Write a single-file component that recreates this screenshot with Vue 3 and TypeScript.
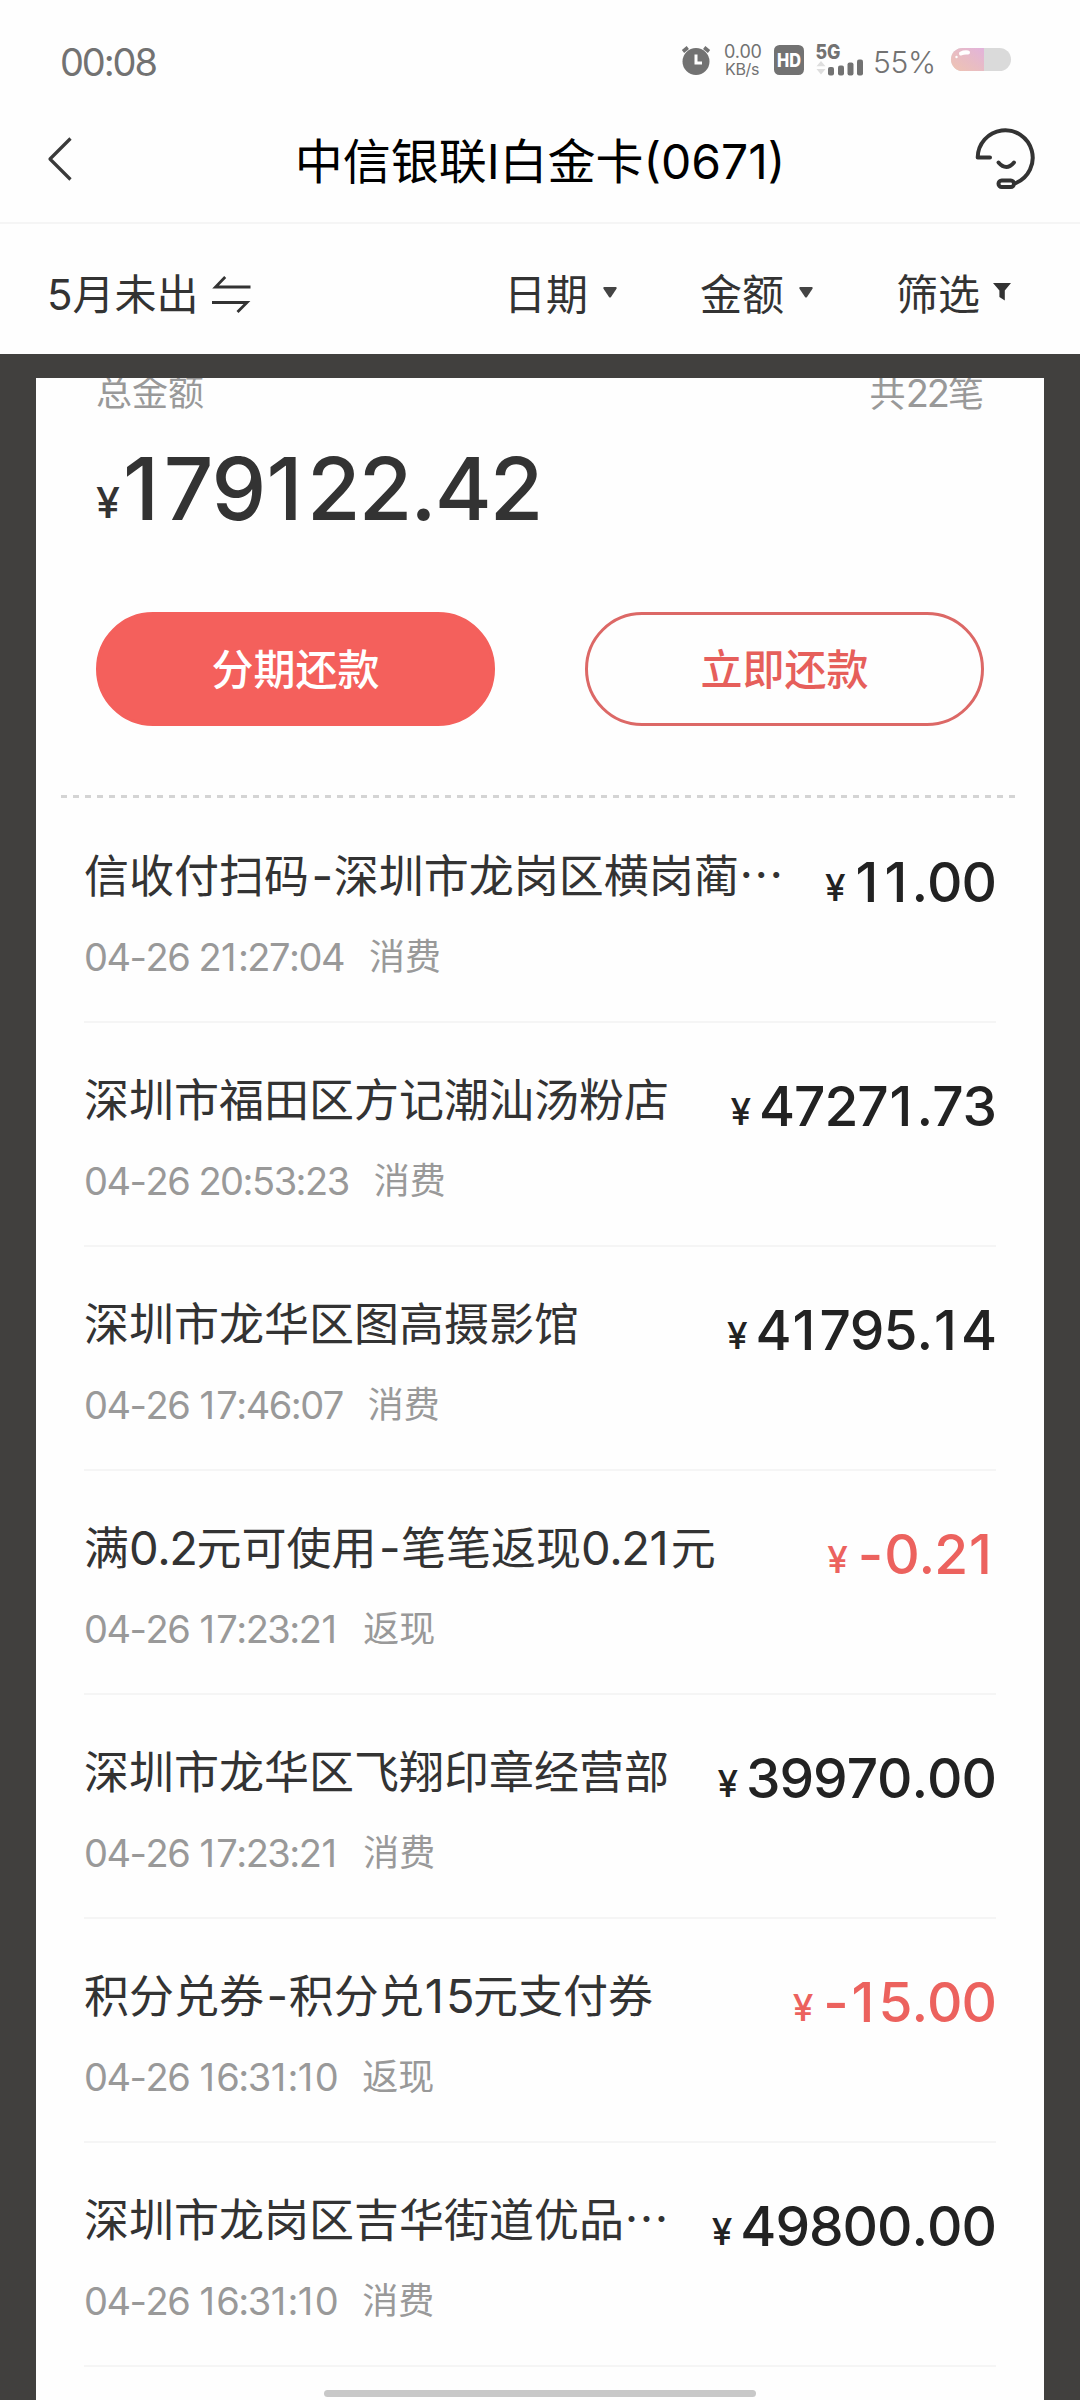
<script setup lang="ts">
import { h, type FunctionalComponent } from 'vue'

interface Bill {
  title: string
  cut?: boolean
  time: string
  kind: string
  amount: string
  refund?: boolean
}

const bills: Bill[] = [
  { title: '信收付扫码-深圳市龙岗区横岗蔺', cut: true, time: '04-26 21:27:04', kind: '消费', amount: '11.00' },
  { title: '深圳市福田区方记潮汕汤粉店', time: '04-26 20:53:23', kind: '消费', amount: '47271.73' },
  { title: '深圳市龙华区图高摄影馆', time: '04-26 17:46:07', kind: '消费', amount: '41795.14' },
  { title: '满0.2元可使用-笔笔返现0.21元', time: '04-26 17:23:21', kind: '返现', amount: '-0.21', refund: true },
  { title: '深圳市龙华区飞翔印章经营部', time: '04-26 17:23:21', kind: '消费', amount: '39970.00' },
  { title: '积分兑券-积分兑15元支付券', time: '04-26 16:31:10', kind: '返现', amount: '-15.00', refund: true },
  { title: '深圳市龙岗区吉华街道优品', cut: true, time: '04-26 16:31:10', kind: '消费', amount: '49800.00' },
]

// Gives figures their own size and spacing; "1" and "-" get extra room around them.
const Figures: FunctionalComponent<{ text: string }> = ({ text }) =>
  (text.match(/1|-|[02-9.: ()]+|[^-0-9.: ()]+/g) ?? []).map((part) => {
    const kind = part === '1' ? 'num one' : part === '-' ? 'num dash' : /[0-9.:()]/.test(part) ? 'num' : 'han'
    return h('span', { class: kind }, part)
  })
Figures.props = ['text']
</script>

<template>
  <div class="screen">
    <div class="status">
      <span class="clock">00:08</span>
      <div class="indicators">
        <svg class="alarm" width="30" height="30" viewBox="0 0 30 30">
          <circle cx="15" cy="16.5" r="13.5" fill="#727272" />
          <path d="M2 6.5 6.8 2.5M28 6.5 23.2 2.5" stroke="#727272" stroke-width="3.6" />
          <path d="M15 9.5v8.5h6" fill="none" stroke="#fff" stroke-width="3" />
        </svg>
        <div class="speed"><span>0.00</span><span class="unit">KB/s</span></div>
        <svg class="hd" width="30" height="30" viewBox="0 0 30 30">
          <rect width="30" height="30" rx="5.5" fill="#727272" />
          <text x="3" y="21.8" textLength="24" lengthAdjust="spacingAndGlyphs" font-size="18.5" font-weight="800" fill="#fff">HD</text>
        </svg>
        <svg class="signal" width="48" height="31" viewBox="0 0 48 31">
          <text x="-0.5" y="14.4" textLength="25" lengthAdjust="spacingAndGlyphs" font-size="19.5" font-weight="800" fill="#727272">5G</text>
          <path d="M0.5 21.2 5 16l4.500 5.200zM0.500 24 5 29.500 9.500 24z" fill="#dedede" />
          <g fill="#727272">
            <rect x="12" y="22" width="6" height="8.500" rx="2" />
            <rect x="22" y="20.500" width="6" height="10" rx="2" />
            <rect x="31.500" y="17.500" width="6" height="13" rx="2" />
            <rect x="41" y="14.500" width="6" height="16" rx="2" />
          </g>
        </svg>
        <span class="percent">55%</span>
        <svg class="battery" width="60" height="23" viewBox="0 0 60 23">
          <defs>
            <linearGradient id="charge" x1="0" y1="1" x2="1" y2="0">
              <stop offset="0" stop-color="#efc4b2" />
              <stop offset="0.5" stop-color="#e8bcc4" />
              <stop offset="1" stop-color="#e2b3dc" />
            </linearGradient>
          </defs>
          <rect width="60" height="23" rx="11.500" fill="#dadada" />
          <path d="M33 0H11.500a11.500 11.500 0 0 0 0 23H33z" fill="url(#charge)" />
          <path d="M10 5.500Q13 4 17 4.500" fill="none" stroke="#fff" stroke-width="4" stroke-linecap="round" />
          <circle cx="5.500" cy="9" r="1.200" fill="#fff" />
        </svg>
      </div>
    </div>

    <header class="nav">
      <svg class="back" width="28" height="46" viewBox="0 0 28 46">
        <path d="M24.500 2.500 4 23 24.500 43.500" fill="none" stroke="#3a3a3a" stroke-width="3.200" stroke-linejoin="round" />
      </svg>
      <h1>中信银联I白金卡(0671)</h1>
      <svg class="service" width="62" height="62" viewBox="0 0 62 62" fill="none" stroke="#333" stroke-width="4" stroke-linecap="round" stroke-linejoin="round">
        <path d="M16 29.500H3.700A27.500 27.500 0 1 1 42 55" />
        <path d="M24.500 34.500Q32.300 43.500 40 34.500" />
        <rect x="24.500" y="52.500" width="15.500" height="6.500" rx="3.200" />
      </svg>
    </header>

    <div class="filters">
      <div class="period">
        <span>5月未出</span>
        <svg width="39" height="37" viewBox="0 0 39 37" fill="none" stroke="#333" stroke-width="2.800">
          <path d="M38.500 11H3.500L13.200 1M0 26.500H35L25.500 36" />
        </svg>
      </div>
      <div class="sorts">
        <div class="sort">
          <span>日期</span>
          <svg class="caret" width="14" height="11" viewBox="0 0 14 11"><path d="M1 0h12q1.300 0.500.5 1.800L8 10q-1 1-2 0L.5 1.800Q-.3.500 1 0z" fill="#444" /></svg>
        </div>
        <div class="sort">
          <span>金额</span>
          <svg class="caret" width="14" height="11" viewBox="0 0 14 11"><path d="M1 0h12q1.300 0.500.5 1.800L8 10q-1 1-2 0L.5 1.800Q-.3.500 1 0z" fill="#444" /></svg>
        </div>
        <div class="sort">
          <span>筛选</span>
          <svg class="funnel" width="18" height="18" viewBox="0 0 18 18"><path d="M0 0h18L11.800 7.500V17.500L6.400 14V7.500z" fill="#333" /></svg>
        </div>
      </div>
    </div>

    <main class="backdrop">
      <section class="card">
        <div class="summary">
          <div class="labels"><span>总金额</span><span>共<i>22</i>笔</span></div>
          <div class="total"><span class="yen">¥</span><Figures text="179122.42" /></div>
          <div class="actions">
            <button class="solid">分期还款</button>
            <button class="outline">立即还款</button>
          </div>
        </div>
        <div class="dashes"></div>
        <ul class="bills">
          <li v-for="(bill, i) in bills" :key="i" class="bill">
            <div class="info">
              <div class="title"><Figures :text="bill.title" /><span v-if="bill.cut" class="dots">…</span></div>
              <div class="meta"><span class="time"><Figures :text="bill.time" /></span><span>{{ bill.kind }}</span></div>
            </div>
            <div class="amount" :class="{ refund: bill.refund }"><span class="yen">¥</span><Figures :text="bill.amount" /></div>
          </li>
        </ul>
      </section>
    </main>
    <div class="home-bar"></div>
  </div>
</template>

<style>
body {
  margin: 0;
  background: #fff;
}
</style>

<style scoped>
.screen {
  position: relative;
  display: flex;
  flex-direction: column;
  width: 1080px;
  height: 2400px;
  overflow: hidden;
  background: #fefefe;
  color: #333;
  font-family: Inter, 'Noto Sans CJK SC', sans-serif;
  font-kerning: none;
}
svg {
  display: block;
  flex: none;
  overflow: visible;
}
.screen :deep(.num) {
  white-space: pre;
}
.screen :deep(.one) {
  padding: 0 0.075em 0 0.025em;
}
.status {
  display: flex;
  justify-content: space-between;
  height: 104px;
  padding: 0 69px 0 60px;
  color: #727272;
}
.clock {
  margin-top: 40px;
  font-size: 38px;
  line-height: 44px;
  letter-spacing: -2.100px;
}
.indicators {
  display: flex;
  align-items: flex-start;
}
.alarm {
  margin-top: 45px;
}
.speed {
  display: flex;
  flex-direction: column;
  width: 37px;
  margin: 43px 0 0 13px;
  font-size: 18px;
  line-height: 18px;
  letter-spacing: -0.500px;
  white-space: nowrap;
}
.speed .unit {
  margin: -1px 0 0 1px;
  font-size: 16px;
  letter-spacing: -0.300px;
}
.hd {
  margin: 45px 0 0 13px;
}
.signal {
  margin: 45px 0 0 12px;
}
.percent {
  width: 63px;
  margin: 44px 0 0 9px;
  font-size: 30px;
  font-weight: 300;
  line-height: 36px;
  letter-spacing: -0.300px;
}
.battery {
  margin: 48px 0 0 15px;
}
.nav {
  display: flex;
  align-items: center;
  justify-content: space-between;
  box-sizing: border-box;
  height: 120px;
  padding: 0 44px 8px 46px;
  border-bottom: 2px solid #f5f5f5;
}
.nav h1 {
  margin: 5px 0 0 32px;
  font-size: 48px;
  font-weight: 400;
  line-height: 60px;
  color: #000;
}
.filters {
  display: flex;
  align-items: center;
  justify-content: space-between;
  box-sizing: border-box;
  height: 130px;
  padding: 12px 69px 0 47px;
  font-size: 42px;
  line-height: 50px;
}
.period {
  display: flex;
  align-items: center;
  gap: 13px;
}
.period svg {
  margin-top: -2px;
}
.sorts {
  display: flex;
  gap: 83px;
}
.sort {
  display: flex;
  align-items: center;
}
.caret {
  margin: -6px 0 0 15px;
}
.funnel {
  margin: -7px 0 0 13px;
}
.backdrop {
  box-sizing: border-box;
  height: 2046px;
  padding: 24px 36px 0;
  background: #41403e;
}
.card {
  height: 2022px;
  overflow: hidden;
  background: #fefefe;
}
.summary {
  display: flow-root;
  padding: 0 60px;
}
.labels {
  display: flex;
  justify-content: space-between;
  height: 40px;
  margin-top: -5px;
  font-size: 36px;
  line-height: 40px;
  color: #999;
}
.labels i {
  font-style: normal;
  font-size: 38px;
  letter-spacing: -2px;
}
.total {
  height: 100px;
  margin-top: 26px;
  font-size: 87px;
  font-weight: 500;
  line-height: 100px;
  letter-spacing: -2px;
  white-space: nowrap;
}
.total .yen {
  position: relative;
  top: -2px;
  margin-right: 3px;
  font-size: 43px;
  line-height: 1;
}
.actions {
  display: flex;
  justify-content: space-between;
  margin-top: 73px;
}
.actions button {
  box-sizing: border-box;
  width: 399px;
  height: 114px;
  padding: 2px 0 0;
  border: 3px solid #f4605c;
  border-radius: 57px;
  font: 500 42px/106px Inter, 'Noto Sans CJK SC', sans-serif;
}
.actions .solid {
  background: #f4605c;
  color: #fff;
}
.actions .outline {
  border-color: #dc6866;
  background: transparent;
  color: #e65f5b;
}
.dashes {
  height: 3px;
  margin: 69px 27px 0 25px;
  background: repeating-linear-gradient(90deg, #d4d4d4 0 6px, transparent 6px 12px);
}
.bills {
  margin: 1px 48px 0;
  padding: 0;
  list-style: none;
}
.bill {
  display: flex;
  justify-content: space-between;
  box-sizing: border-box;
  height: 224px;
  padding-top: 48px;
  border-bottom: 2px solid #f5f5f5;
}
.title {
  height: 60px;
  font-size: 45px;
  line-height: 60px;
  white-space: nowrap;
}
.title :deep(.num) {
  font-size: 47px;
  line-height: 1;
  letter-spacing: -1.500px;
}
.title :deep(.dash) {
  margin: 0 2px 0 2.500px;
}
.title .dots {
  font-family: 'Noto Sans CJK SC', sans-serif;
  line-height: 1;
}
.meta {
  display: flex;
  gap: 25px;
  margin-top: 28px;
  font-size: 36px;
  line-height: 44px;
  color: #999;
}
.time {
  font-size: 38px;
  letter-spacing: -1.500px;
}
.amount {
  margin-top: 5px;
  font-size: 55px;
  font-weight: 500;
  line-height: 60px;
  letter-spacing: -1.050px;
  color: #222;
  white-space: nowrap;
}
.amount .yen {
  position: relative;
  top: -1px;
  margin-right: 9px;
  font-size: 37px;
  line-height: 1;
}
.amount :deep(.one) {
  padding: 0 0.095em 0 0.035em;
}
.amount :deep(.dash) {
  margin: 0 2px 0 2px;
}
.refund {
  color: #ec625e;
}
.home-bar {
  position: absolute;
  left: 324px;
  bottom: 3px;
  width: 432px;
  height: 7px;
  border-radius: 4px;
  background: #c8c8c8;
}
</style>
